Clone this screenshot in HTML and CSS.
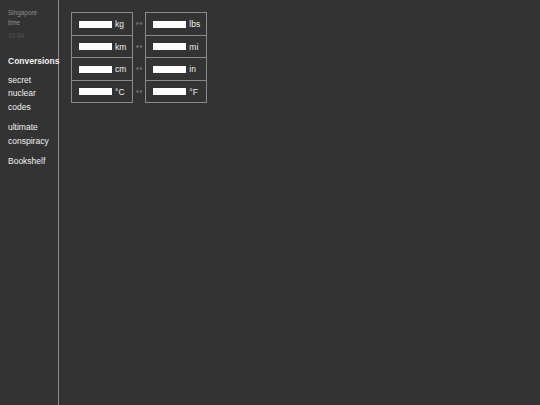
FILE: index.html
```html
<!DOCTYPE html>
<html>
<head>
  <meta name="viewport" content="width=device-width, initial-scale=1.0">
  <link rel="stylesheet" href="styles.css">
</head>
<body>
  <nav class="sidebar">
    <div class="clock">
      <div class="clock-label">Singapore time</div>
      <div class="clock-time">19:44</div>
    </div>
    <ul class="nav-list">
      <li class="nav-item active">Conversions</li>
      <li class="nav-item">secret nuclear codes</li>
      <li class="nav-item">ultimate conspiracy</li>
      <li class="nav-item">Bookshelf</li>
    </ul>
  </nav>
  <main class="content">
    <table class="converter">
      <tr>
        <td class="unit-cell"><input class="unit-input" type="text"><span class="unit">kg</span></td>
        <td class="arrow">↔</td>
        <td class="unit-cell"><input class="unit-input" type="text"><span class="unit">lbs</span></td>
      </tr>
      <tr>
        <td class="unit-cell"><input class="unit-input" type="text"><span class="unit">km</span></td>
        <td class="arrow">↔</td>
        <td class="unit-cell"><input class="unit-input" type="text"><span class="unit">mi</span></td>
      </tr>
      <tr>
        <td class="unit-cell"><input class="unit-input" type="text"><span class="unit">cm</span></td>
        <td class="arrow">↔</td>
        <td class="unit-cell"><input class="unit-input" type="text"><span class="unit">in</span></td>
      </tr>
      <tr>
        <td class="unit-cell"><input class="unit-input" type="text"><span class="unit">°C</span></td>
        <td class="arrow">↔</td>
        <td class="unit-cell"><input class="unit-input" type="text"><span class="unit">°F</span></td>
      </tr>
    </table>
  </main>
</body>
</html>
```

FILE: styles.css
```css
* {
  margin: 0;
  padding: 0;
  box-sizing: border-box;
  font-family: 'Liberation Sans', Arial, sans-serif;
}

body {
  height: 100vh;
  display: flex;
  background: #333333;
  color: #f0f0f0;
}

.sidebar {
  width: 59px;
  flex-shrink: 0;
  border-right: 1px solid #8a8a8a;
  padding: 8px 0 0 8px;
}

.clock {
  font-size: 6.4px;
  line-height: 10px;
  margin-bottom: 14px;
}

.clock-label {
  width: 34px;
  color: #8c8c8c;
}

.clock-time {
  color: #555555;
  margin-top: 3px;
}

.nav-list {
  list-style: none;
  font-size: 8.5px;
  line-height: 13.5px;
}

.nav-item {
  margin-bottom: 7px;
  width: 48px;
}

.nav-item.active {
  font-weight: bold;
  white-space: nowrap;
  margin-bottom: 5px;
}

.content {
  flex-grow: 1;
  padding: 12px 0 0 12px;
}

.converter {
  border-collapse: collapse;
  font-size: 8.5px;
}

.unit-cell {
  border: 1px solid #8a8a8a;
  height: 22.5px;
  padding: 0 6px 0 7px;
  white-space: nowrap;
}

.unit-input {
  width: 33px;
  height: 7px;
  border: none;
  background: #ffffff;
  vertical-align: middle;
  outline: none;
}

.unit {
  margin-left: 3px;
  vertical-align: middle;
}

.arrow {
  width: 13px;
  text-align: center;
  font-size: 8px;
  color: #7a7a7a;
  font-family: 'DejaVu Sans', sans-serif;
}
```
